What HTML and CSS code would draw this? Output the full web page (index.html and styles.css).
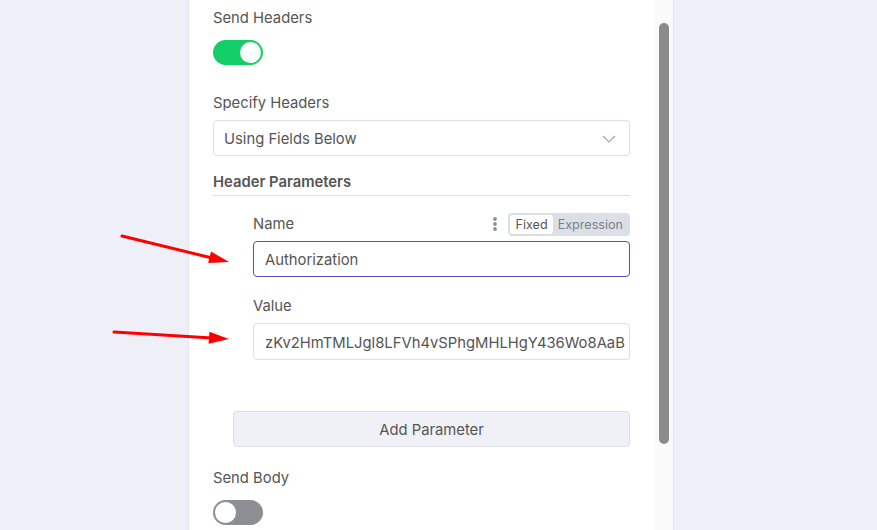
FILE: index.html
```html
<!DOCTYPE html>
<html>
<head>
<meta charset="utf-8">
<link rel="stylesheet" href="styles.css">
</head>
<body>
<div class="page">
  <div class="panel">
    <div class="content">
      <div class="label">Send Headers</div>
      <div class="switch on"><span class="knob"></span></div>
      <div class="label gap-lg">Specify Headers</div>
      <div class="select">
        <span>Using Fields Below</span>
        <svg class="chevron" width="14" height="8" viewBox="0 0 14 8"><path d="M1 1 L7 7 L13 1" fill="none" stroke="#a0a3ab" stroke-width="1.1"/></svg>
      </div>
      <div class="section-title">Header Parameters</div>
      <div class="params">
        <div class="param-row">
          <span class="label">Name</span>
          <div class="param-actions">
            <svg class="dots" width="6" height="16" viewBox="0 0 6 16"><circle cx="3" cy="3" r="1.9" fill="#8d9096"/><circle cx="3" cy="8" r="1.9" fill="#8d9096"/><circle cx="3" cy="13" r="1.9" fill="#8d9096"/></svg>
            <div class="seg">
              <span class="seg-item active">Fixed</span>
              <span class="seg-item">Expression</span>
            </div>
          </div>
        </div>
        <div class="input focused">Authorization</div>
        <div class="label value-label">Value</div>
        <div class="input clip">zKv2HmTMLJgl8LFVh4vSPhgMHLHgY436Wo8AaB</div>
      </div>
      <button class="add-btn">Add Parameter</button>
      <div class="label body-label">Send Body</div>
      <div class="switch off"><span class="knob"></span></div>
    </div>
    <div class="scrollbar"><div class="thumb"></div></div>
  </div>
  <svg class="arrows" width="877" height="530" viewBox="0 0 877 530">
    <line x1="122" y1="236" x2="212" y2="258" stroke="#ff0000" stroke-width="3" stroke-linecap="round"/>
    <polygon points="229,262 208.2,263.1 211,251.5" fill="#ff0000"/>
    <line x1="114" y1="332" x2="212" y2="338" stroke="#ff0000" stroke-width="3" stroke-linecap="round"/>
    <polygon points="229,339 208.6,343.8 209.4,331.8" fill="#ff0000"/>
  </svg>
</div>
</body>
</html>
```
FILE: styles.css
```css
html, body {
  margin: 0;
  padding: 0;
  background: #eff0f7;
  font-family: Inter, "Open Sans", sans-serif;
  color: #555555;
  font-size: 14.8px;
}
.page {
  position: relative;
  width: 877px;
  height: 530px;
  overflow: hidden;
  display: flex;
  padding-left: 188px;
  box-sizing: border-box;
}
.panel {
  display: flex;
  height: 530px;
  background: #ffffff;
  border-left: 1px solid #e1e3ee;
  border-right: 1px solid #e1e3ee;
}
.content {
  width: 417px;
  padding: 8px 25px 0 24px;
  display: flex;
  flex-direction: column;
}
.label {
  line-height: 20px;
  font-size: 14.8px;
  color: #555555;
}
.gap-lg { margin-top: 28px; }
.switch {
  margin-top: 12px;
  width: 50px;
  height: 25px;
  border-radius: 13px;
  box-sizing: border-box;
  padding: 2px;
  display: flex;
}
.switch.on { background: #13ce66; justify-content: flex-end; }
.switch.off { background: #8e8f95; justify-content: flex-start; margin-top: 12px; }
.knob {
  width: 21px;
  height: 21px;
  border-radius: 50%;
  background: #ffffff;
}
.select {
  margin-top: 7px;
  height: 36px;
  box-sizing: border-box;
  border: 1px solid #dcdfe6;
  border-radius: 4px;
  padding: 1px 13px 0 10px;
  display: flex;
  align-items: center;
  justify-content: space-between;
}
.section-title {
  margin-top: 16px;
  line-height: 20px;
  font-weight: 600;
  padding-bottom: 3px;
  border-bottom: 1px solid #dcdfe6;
}
.params {
  margin-left: 40px;
  margin-top: 17px;
  display: flex;
  flex-direction: column;
}
.param-row {
  height: 22px;
  display: flex;
  align-items: center;
  justify-content: space-between;
}
.param-actions {
  display: flex;
  align-items: center;
  gap: 10px;
}
.dots { display: block; }
.seg {
  height: 23px;
  box-sizing: border-box;
  background: #dbdfe7;
  border-radius: 4px;
  padding: 2px;
  display: flex;
  align-items: stretch;
  font-size: 12.6px;
}
.seg-item {
  display: flex;
  align-items: center;
  padding: 0 5px;
  color: #7b7f89;
  border-radius: 3px;
}
.seg-item.active {
  background: #ffffff;
  color: #555555;
}
.input {
  height: 36px;
  box-sizing: border-box;
  border: 1px solid #dcdfe6;
  border-radius: 4px;
  padding: 2px 0 0 11px;
  display: flex;
  align-items: center;
  white-space: nowrap;
  overflow: hidden;
}
.input.focused {
  margin-top: 6px;
  border-color: #5b4fc2;
}
.value-label { margin-top: 19px; }
.input.clip { margin-top: 7px; height: 37px; }
.add-btn {
  margin-top: 51px;
  margin-left: 20px;
  height: 36px;
  padding-top: 2px;
  border: 1px solid #dcdfe6;
  border-radius: 4px;
  background: #f0f1f6;
  font-family: Inter, "Open Sans", sans-serif;
  font-size: 14.8px;
  color: #555555;
}
.body-label { margin-top: 21px; }
.scrollbar {
  width: 18px;
  background: #fafafa;
  padding-top: 23px;
  padding-left: 4px;
  box-sizing: border-box;
}
.thumb {
  width: 10px;
  height: 421px;
  background: #8c8c8c;
  border-radius: 5px;
}
.arrows {
  position: absolute;
  left: 0;
  top: 0;
  pointer-events: none;
}
```
